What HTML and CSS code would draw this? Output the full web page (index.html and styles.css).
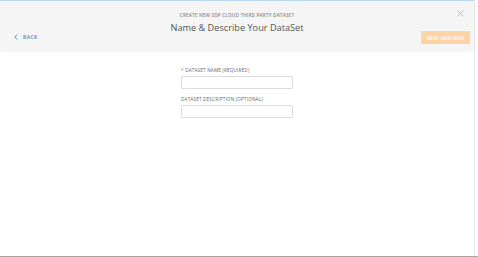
FILE: index.html
```html
<!DOCTYPE html>
<html lang="en">
<head>
  <meta charset="UTF-8" />
  <title>Name & Describe Your DataSet</title>
  <link rel="stylesheet" href="styles.css">
</head>
<body>
  <div class="page">
    <header class="header">
      <div class="header-left">
        <a class="back" href="#">
          <svg width="4" height="6" viewBox="0 0 4 6"><path d="M3.2 0.5 L0.8 3 L3.2 5.5" fill="none" stroke="#3f87c6" stroke-width="0.9"/></svg>
          <span>BACK</span>
        </a>
      </div>
      <div class="header-center">
        <div class="subtitle">CREATE NEW SDP CLOUD THIRD PARTY DATASET</div>
        <h1 class="title">Name &amp; Describe Your DataSet</h1>
      </div>
      <div class="header-right">
        <button class="close" aria-label="Close">
          <svg width="7" height="7" viewBox="0 0 7 7"><path d="M0.5 0.5 L6.5 6.5 M6.5 0.5 L0.5 6.5" stroke="#b5b5b5" stroke-width="0.8"/></svg>
        </button>
        <button class="save-btn">SAVE AND RUN</button>
      </div>
    </header>

    <main class="form">
      <label class="field-label"><span class="req">*</span> DATASET NAME (REQUIRED)</label>
      <input class="field-input" type="text" />
      <label class="field-label">DATASET DESCRIPTION (OPTIONAL)</label>
      <input class="field-input" type="text" />
    </main>
  </div>
  <div class="bottom-bar"></div>
</body>
</html>
```

FILE: styles.css
```css
html, body {
  margin: 0;
  padding: 0;
  height: 100%;
}
body {
  font-family: "Open Sans", "DejaVu Sans", sans-serif;
  background-color: #fff;
  display: flex;
  flex-direction: column;
  overflow: hidden;
}
.page {
  flex: 1;
  width: 475px;
  border-right: 1px solid #ececec;
  box-sizing: border-box;
}
.header {
  display: grid;
  grid-template-columns: 1fr auto 1fr;
  height: 49px;
  box-sizing: border-box;
  background-color: #f5f5f5;
  border-top: 1px solid #b6d8f2;
  box-shadow: 0 2px 4px rgba(0, 0, 0, 0.07);
  padding: 0 4px;
}
.header-left {
  display: flex;
  align-items: flex-end;
  padding: 0 0 9px 10px;
}
.back {
  display: flex;
  align-items: center;
  gap: 5px;
  color: #3f87c6;
  text-decoration: none;
  font-size: 5px;
  letter-spacing: 0.4px;
  font-weight: 600;
}
.header-center {
  text-align: center;
  padding-top: 11px;
}
.subtitle {
  font-size: 4.6px;
  letter-spacing: 0.2px;
  color: #888;
  font-weight: 600;
}
.title {
  margin: 3px 0 0;
  font-size: 9.2px;
  font-weight: 400;
  color: #555;
}
.header-right {
  display: flex;
  flex-direction: column;
  align-items: flex-end;
  justify-content: space-between;
  padding: 9px 0 5px;
}
.close {
  background: none;
  border: none;
  padding: 0;
  margin-right: 6px;
  line-height: 0;
  cursor: pointer;
}
.save-btn {
  width: 49px;
  height: 13px;
  padding: 0;
  border: none;
  background-color: #fcd4a6;
  color: #fff;
  font-family: inherit;
  font-size: 4.6px;
  letter-spacing: 0.35px;
  font-weight: 600;
}
.form {
  width: 112px;
  margin: 18px auto 0;
  display: flex;
  flex-direction: column;
}
.field-label {
  font-size: 4.6px;
  color: #666;
  letter-spacing: 0.2px;
  margin-bottom: 3px;
}
.req {
  color: #e8623a;
}
.field-input {
  height: 13px;
  box-sizing: border-box;
  border: 1px solid #ddd;
  border-radius: 1px;
  margin: 0 0 7px;
  padding: 0 3px;
}
.bottom-bar {
  height: 1px;
  background-color: #a5a5a5;
}
```
